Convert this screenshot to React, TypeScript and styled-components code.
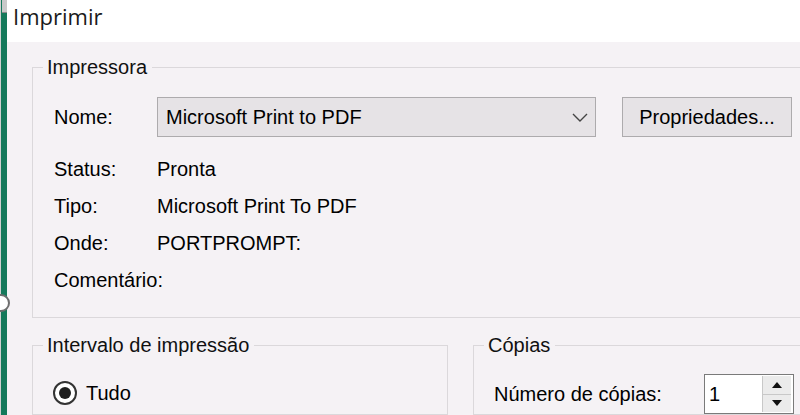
import React from "react";
import styled, { createGlobalStyle } from "styled-components";

const GlobalStyle = createGlobalStyle`
  html, body { margin: 0; padding: 0; background: #f5f2f5; overflow: hidden; }
  #root { width: 800px; height: 415px; }
`;

const Frame = styled.div`
  position: relative;
  display: flex;
  width: 800px;
  height: 415px;
  overflow: hidden;
  font-family: "Liberation Sans", Arial, sans-serif;
  font-size: 20px;
  color: #000;
`;

const Strip = styled.div`
  position: relative;
  flex: 0 0 7px;
  box-sizing: border-box;
  border-left: 1px solid #d0d0d0;
  background: #15795b;
`;

const Grip = styled.div`
  position: absolute;
  left: 1px;
  top: 0;
  width: 5px;
  height: 12px;
  background: #c9c9c9;
  border-bottom: 1px solid #8a8a8a;
`;

const Handle = styled.div`
  position: absolute;
  left: -9px;
  top: 294px;
  width: 14px;
  height: 14px;
  border-radius: 50%;
  background: #fff;
  border: 2px solid #6e6e6e;
  z-index: 2;
`;

const Main = styled.div`
  flex: 1;
  display: flex;
  flex-direction: column;
  min-width: 0;
`;

const TitleBar = styled.div`
  height: 42px;
  flex: none;
  background: #fff;
  padding-left: 6px;
  font-family: "Open Sans", "Noto Sans", sans-serif;
  font-size: 22px;
  line-height: 33px;
  color: #1a1a1a;
`;

const Body = styled.div`
  flex: 1;
  display: flex;
  flex-direction: column;
  padding: 14px 0 0 25px;
  background: #f5f2f5;
  overflow: hidden;
`;

const Group = styled.fieldset<{ $width?: number }>`
  margin: 0;
  padding: 0;
  min-width: 0;
  border: 1px solid #dbd8db;
  box-sizing: border-box;
  ${(p) => (p.$width ? `width: ${p.$width}px; flex: none;` : `flex: 1; margin-right: -20px;`)}
`;

const Legend = styled.legend`
  margin-left: 10px;
  padding: 0 5px 0 4px;
  line-height: 23px;
  color: #111;
`;

const PrinterContent = styled.div`
  padding: 18px 0 16px 21px;
`;

const NameRow = styled.div`
  display: flex;
  align-items: center;
`;

const Label = styled.div<{ $width: number }>`
  flex: none;
  width: ${(p) => p.$width}px;
  white-space: nowrap;
`;

const Combo = styled.div`
  flex: none;
  width: 439px;
  height: 40px;
  box-sizing: border-box;
  display: flex;
  align-items: center;
  justify-content: space-between;
  padding: 0 7px 0 8px;
  border: 1px solid #adabad;
  background: #e6e3e6;
`;

const Button = styled.button`
  flex: none;
  margin-left: 26px;
  width: 170px;
  height: 40px;
  box-sizing: border-box;
  border: 1px solid #adabad;
  background: #e6e3e6;
  font: inherit;
  color: #000;
  padding: 0;
`;

const InfoGrid = styled.div`
  margin-top: 14px;
  display: grid;
  grid-template-columns: 103px auto;
  grid-auto-rows: 37px;
  align-items: center;
  white-space: nowrap;
`;

const BottomRow = styled.div`
  display: flex;
  gap: 25px;
  margin-top: 16px;
`;

const RangeContent = styled.div`
  padding: 18px 0 0 20px;
`;

const RadioRow = styled.label`
  display: flex;
  align-items: center;
  gap: 9px;
  height: 36px;
`;

const Radio = styled.span`
  position: relative;
  flex: none;
  width: 24px;
  height: 24px;
  box-sizing: border-box;
  border-radius: 50%;
  border: 2px solid #333;
  background: #fff;
  &::after {
    content: "";
    position: absolute;
    left: 4px;
    top: 4px;
    width: 12px;
    height: 12px;
    border-radius: 50%;
    background: #1f1f1f;
  }
`;

const CopiesContent = styled.div`
  display: flex;
  align-items: center;
  padding: 17px 0 0 20px;
`;

const Spin = styled.div`
  flex: none;
  display: flex;
  width: 90px;
  height: 40px;
  box-sizing: border-box;
  border: 1px solid #7a7a7a;
  background: #fff;
`;

const SpinValue = styled.div`
  flex: 1;
  padding-left: 4px;
  line-height: 38px;
`;

const SpinButtons = styled.div`
  flex: none;
  display: flex;
  flex-direction: column;
  width: 28px;
  margin: 1px 2px 1px 0;
  border-left: 1px solid #c8c8c8;
`;

const SpinButton = styled.div<{ $down?: boolean }>`
  flex: 1;
  display: flex;
  align-items: center;
  justify-content: center;
  background: #ebebeb;
  ${(p) => (p.$down ? "border-top: 1px solid #c8c8c8;" : "")}
`;

const Chevron = () => (
  <svg width="16" height="9" viewBox="0 0 16 9">
    <polyline points="1,1 8,8 15,1" fill="none" stroke="#444" strokeWidth="1.4" />
  </svg>
);

const Arrow = ({ down }: { down?: boolean }) => (
  <svg width="10" height="6" viewBox="0 0 10 6">
    <polygon points={down ? "0,0 10,0 5,6" : "0,6 10,6 5,0"} fill="#111" />
  </svg>
);

export default function App() {
  return (
    <>
      <GlobalStyle />
      <Frame>
        <Strip>
          <Grip />
          <Handle />
        </Strip>
        <Main>
          <TitleBar>Imprimir</TitleBar>
          <Body>
            <Group>
              <Legend>Impressora</Legend>
              <PrinterContent>
                <NameRow>
                  <Label $width={103}>Nome:</Label>
                  <Combo>
                    <span>Microsoft Print to PDF</span>
                    <Chevron />
                  </Combo>
                  <Button>Propriedades...</Button>
                </NameRow>
                <InfoGrid>
                  <span>Status:</span>
                  <span>Pronta</span>
                  <span>Tipo:</span>
                  <span>Microsoft Print To PDF</span>
                  <span>Onde:</span>
                  <span>PORTPROMPT:</span>
                  <span>Comentário:</span>
                  <span></span>
                </InfoGrid>
              </PrinterContent>
            </Group>
            <BottomRow>
              <Group $width={416}>
                <Legend>Intervalo de impressão</Legend>
                <RangeContent>
                  <RadioRow>
                    <Radio />
                    <span>Tudo</span>
                  </RadioRow>
                </RangeContent>
              </Group>
              <Group>
                <Legend>Cópias</Legend>
                <CopiesContent>
                  <Label $width={210}>Número de cópias:</Label>
                  <Spin>
                    <SpinValue>1</SpinValue>
                    <SpinButtons>
                      <SpinButton>
                        <Arrow />
                      </SpinButton>
                      <SpinButton $down>
                        <Arrow down />
                      </SpinButton>
                    </SpinButtons>
                  </Spin>
                </CopiesContent>
              </Group>
            </BottomRow>
          </Body>
        </Main>
      </Frame>
    </>
  );
}
